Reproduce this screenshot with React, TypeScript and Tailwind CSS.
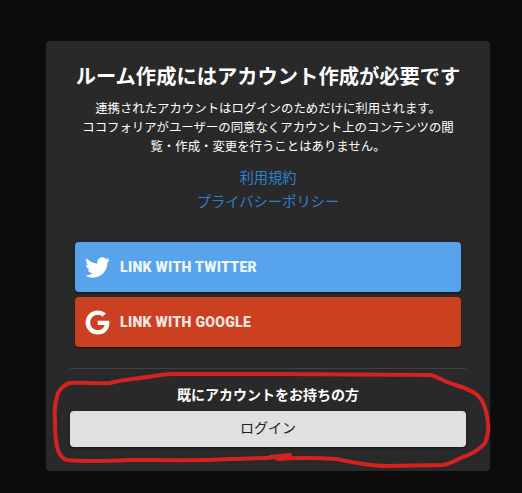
import { FaGoogle, FaTwitter } from 'react-icons/fa';

export default function App() {
  return (
    <div className="relative h-[493px] w-[522px] overflow-hidden bg-[#0c0c0c] pl-[46px] pt-[41px] font-['Roboto','Noto_Sans_CJK_JP',sans-serif]">
      <div className="flex h-[430px] w-[444px] flex-col rounded bg-[#292929] px-6 text-center text-white">
        {/* Heading */}
        <h1 className="mt-[22px] text-[20.3px] leading-[28px] font-bold whitespace-nowrap">ルーム作成にはアカウント作成が必要です</h1>
        <p className="mx-auto mt-[8px] w-[380px] text-[12.4px] leading-[19px]">
          連携されたアカウントはログインのためだけに利用されます。
          <br />
          ココフォリアがユーザーの同意なくアカウント上のコンテンツの閲覧・作成・変更を行うことはありません。
        </p>

        {/* Links */}
        <div className="mt-[10px] flex flex-col text-[14.3px] leading-6 text-[#2f7fd0]">
          <a>利用規約</a>
          <a>プライバシーポリシー</a>
        </div>

        {/* Link buttons */}
        <div className="mx-[5px] mt-[28px] flex flex-col gap-[5px]">
          <button className="flex h-[50px] items-center gap-[10px] rounded-sm bg-[#57a3ec] pl-[10px] text-sm font-black tracking-[0.3px] text-[#eef6fd] shadow-[0_1px_2px_rgba(0,0,0,0.6)]">
            <FaTwitter className="h-[25px] w-[25px] text-white" />
            LINK WITH TWITTER
          </button>
          <button className="flex h-[50px] items-center gap-[10px] rounded-sm bg-[#cc4022] pl-[10px] text-sm font-black tracking-[0.3px] text-[#f8e6e0] shadow-[0_1px_2px_rgba(0,0,0,0.6)]">
            <FaGoogle className="h-[25px] w-[25px] text-white" />
            LINK WITH GOOGLE
          </button>
        </div>

        {/* Existing account */}
        <div className="mt-[21px] border-t border-[#414141] pt-[16px]">
          <p className="text-sm leading-5 font-bold">既にアカウントをお持ちの方</p>
          <button className="mt-[6px] h-9 w-full rounded bg-[#e0e0e0] pb-[2px] text-sm text-[#222222] shadow-[0_1px_2px_rgba(0,0,0,0.5)]">ログイン</button>
        </div>
      </div>

      {/* Hand-drawn circle */}
      <svg className="absolute top-0 left-0" width="522" height="493" viewBox="0 0 522 493" fill="none">
        <path
          d="M270 457 L290 455 L278 459 C300 457 320 458 337 459 C355 463 370 466 387 466 L443 465 C450 464 456 460 463 457 C472 454 480 449 485 443 C488 435 489 429 488 423 C487 415 486 408 483 403 C481 398 478 395 473 392 C466 388 458 386 450 383 C443 381 437 376 430 375 L280 374 L173 374 C165 374 155 376 147 377 C135 379 122 380 110 383 C97 384 83 382 70 383 C64 385 60 389 58 393 C55 402 54 411 55 420 C55 431 55 442 58 450 C60 456 63 459 67 460 C88 462 109 461 130 460 C163 460 197 461 230 459 C247 459 263 458 280 457"
          stroke="#d42222"
          strokeWidth="4"
          strokeLinecap="round"
          strokeLinejoin="round"
        />
      </svg>
    </div>
  );
}
